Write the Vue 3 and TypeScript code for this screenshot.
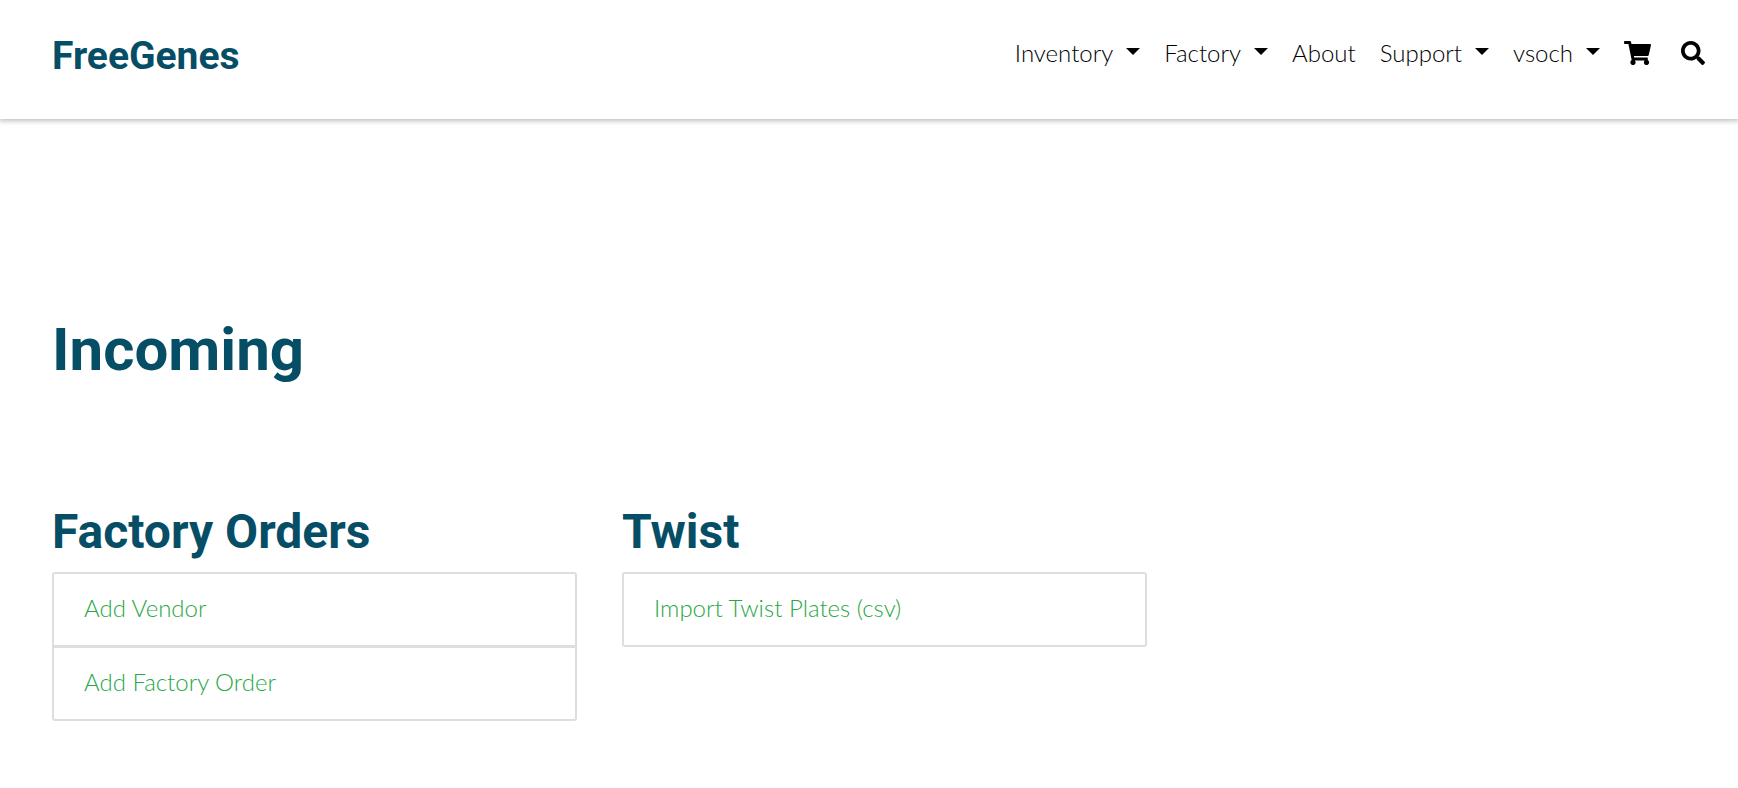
<script setup lang="ts">
interface NavItem { label: string; menu: boolean }
interface Group { title: string; links: string[] }

const nav: NavItem[] = [
  { label: 'Inventory', menu: true },
  { label: 'Factory', menu: true },
  { label: 'About', menu: false },
  { label: 'Support', menu: true },
  { label: 'vsoch', menu: true },
]
const groups: Group[] = [
  { title: 'Factory Orders', links: ['Add Vendor', 'Add Factory Order'] },
  { title: 'Twist', links: ['Import Twist Plates (csv)'] },
]
</script>

<template>
  <header class="bar">
    <a class="brand" href="#">FreeGenes</a>
    <nav class="nav">
      <template v-for="item in nav" :key="item.label">
        <button v-if="item.menu" type="button" class="nav-item">
          {{ item.label }}
          <svg class="caret" width="14" height="7" viewBox="0 0 14 7" aria-hidden="true"><path d="M0 0h14L7 7z" /></svg>
        </button>
        <a v-else href="#" class="nav-item">{{ item.label }}</a>
      </template>
      <a class="icon cart" href="#" aria-label="Cart">
        <svg width="27" height="24" viewBox="0 0 576 512"><path d="M528.12 301.319l47.273-208C578.806 78.301 567.391 64 551.99 64H159.208l-9.166-44.81C147.758 8.021 137.93 0 126.529 0H24C10.745 0 0 10.745 0 24v16c0 13.255 10.745 24 24 24h69.883l70.248 343.435C147.325 417.1 136 435.222 136 456c0 30.928 25.072 56 56 56s56-25.072 56-56c0-15.674-6.447-29.835-16.824-40h209.647C430.447 426.165 424 440.326 424 456c0 30.928 25.072 56 56 56s56-25.072 56-56c0-22.172-12.888-41.332-31.579-50.405l5.517-24.276c3.413-15.018-8.002-29.319-23.403-29.319H218.117l-6.545-32h293.145c11.206 0 20.92-7.754 23.403-18.681z" /></svg>
      </a>
      <button type="button" class="icon" aria-label="Search">
        <svg width="24" height="24" viewBox="0 0 512 512"><path d="M505 442.7L405.3 343c-4.500-4.500-10.600-7-17-7H372c27.600-35.300 44-79.700 44-128C416 93.100 322.900 0 208 0S0 93.100 0 208s93.100 208 208 208c48.300 0 92.700-16.400 128-44v16.300c0 6.400 2.500 12.500 7 17l99.700 99.700c9.400 9.400 24.600 9.400 33.900 0l28.300-28.300c9.400-9.400 9.400-24.600.1-34zM208 336c-70.700 0-128-57.200-128-128 0-70.700 57.200-128 128-128 70.700 0 128 57.200 128 128 0 70.700-57.200 128-128 128z" /></svg>
      </button>
    </nav>
  </header>
  <main class="page">
    <h1>Incoming</h1>
    <div class="groups">
      <section v-for="group in groups" :key="group.title">
        <h2>{{ group.title }}</h2>
        <ul>
          <li v-for="link in group.links" :key="link"><a href="#">{{ link }}</a></li>
        </ul>
      </section>
    </div>
  </main>
</template>

<style>
body { background: #fff; }
</style>

<style scoped>
.bar {
  display: flex;
  align-items: flex-start;
  justify-content: space-between;
  height: 119px;
  padding: 0 33px 0 52px;
  box-sizing: border-box;
  box-shadow: 0 1px 5px 1px rgba(0, 0, 0, 0.25);
}
.brand {
  margin-top: 32px;
  font: 700 39px/48px Roboto, sans-serif;
  color: #064e66;
  text-decoration: none;
}
.nav {
  display: flex;
  align-items: center;
  gap: 24px;
  margin-top: 35px;
  font: 300 24px/36px Lato, sans-serif;
}
.nav-item {
  display: flex;
  align-items: center;
  gap: 13px;
  padding: 0;
  border: 0;
  background: none;
  color: #000;
  font: inherit;
  text-decoration: none;
  white-space: nowrap;
}
.caret { margin-bottom: 3px; }
.icon {
  display: flex;
  padding: 0;
  border: 0;
  background: none;
  color: #000;
}
.cart { margin-right: 6px; }
svg { fill: currentColor; }
.page { padding: 193px 21px 64px 52px; }
h1, h2 {
  margin: 0;
  color: #064e66;
  font-family: Roboto, sans-serif;
  font-weight: 700;
}
h1 { font-size: 60px; line-height: 76px; }
.groups {
  display: grid;
  grid-template-columns: repeat(3, 1fr);
  gap: 45px;
  margin-top: 114px;
}
h2 { font-size: 48px; line-height: 60px; }
ul {
  margin: 10px 0 0;
  padding: 0;
  list-style: none;
  border: 2px solid #dedede;
  border-radius: 3px;
}
li + li { border-top: 3px solid #dedede; }
li a {
  display: block;
  padding: 16px 30px 19px;
  color: #28a745;
  font: 300 24px/36px Lato, sans-serif;
  text-decoration: none;
}
</style>
